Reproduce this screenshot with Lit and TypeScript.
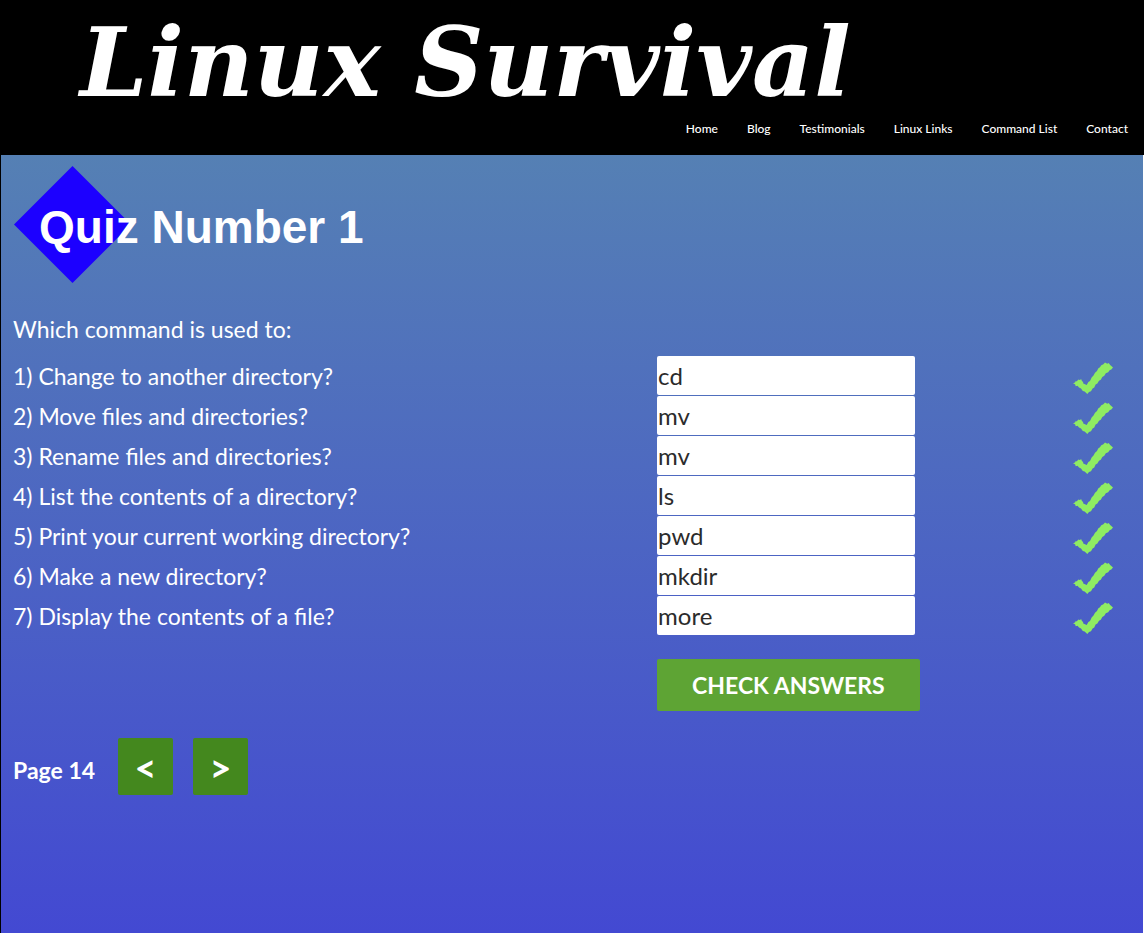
import { LitElement, html, css } from "lit";
import { customElement, state } from "lit/decorators.js";

interface Question {
  text: string;
  answer: string;
}

const NAV = ["Home", "Blog", "Testimonials", "Linux Links", "Command List", "Contact"];

const QUESTIONS: Question[] = [
  { text: "Change to another directory?", answer: "cd" },
  { text: "Move files and directories?", answer: "mv" },
  { text: "Rename files and directories?", answer: "mv" },
  { text: "List the contents of a directory?", answer: "ls" },
  { text: "Print your current working directory?", answer: "pwd" },
  { text: "Make a new directory?", answer: "mkdir" },
  { text: "Display the contents of a file?", answer: "more" },
];

@customElement("site-header")
export class SiteHeader extends LitElement {
  static styles = css`
    :host {
      display: block;
      background: #000;
      color: #fff;
    }
    .logo {
      display: block;
      padding: 7px 0 0 80px;
      font: italic bold 96px/112px "DejaVu Serif", serif;
      color: #fff;
      text-decoration: none;
      white-space: nowrap;
    }
    .nav {
      display: flex;
      justify-content: flex-end;
      gap: 29px;
      padding: 0 16px 16px 0;
      font: 500 12px/20px Lato, sans-serif;
    }
    .link {
      color: #fff;
      text-decoration: none;
    }
  `;

  render() {
    return html`
      <a class="logo" href="#">Linux Survival</a>
      <nav class="nav">${NAV.map((n) => html`<a class="link" href="#">${n}</a>`)}</nav>
    `;
  }
}

@customElement("quiz-row")
export class QuizRow extends LitElement {
  static properties = {
    number: { type: Number },
    text: { type: String },
    value: { type: String },
    correct: { type: Boolean },
  };
  declare number: number;
  declare text: string;
  declare value: string;
  declare correct: boolean;

  static styles = css`
    :host {
      display: grid;
      grid-template-columns: 57% 258px 1fr;
      align-items: start;
      height: 40px;
    }
    .label {
      line-height: 40px;
    }
    .answer {
      box-sizing: border-box;
      width: 100%;
      height: 39px;
      margin: 0;
      padding: 0 1px;
      border: 0;
      border-radius: 2px;
      background: #fff;
      color: #2b2b2b;
      font: 24px Lato, sans-serif;
    }
    .mark {
      justify-self: end;
      width: 40px;
      height: 32px;
      margin: 6px 30px 0 0;
      fill: #8fec62;
    }
  `;

  render() {
    return html`
      <label class="label" for="answer">${this.number}) ${this.text}</label>
      <input class="answer" id="answer" type="text" .value=${this.value} />
      ${this.correct
        ? html`<svg class="mark" viewBox="0 0 40 32" role="img" aria-label="Correct">
            <path
              d="M0 21.2 2 20.6 2.5 19.2 4 19.3 5.2 17.4 6.3 18 8.3 17.3 9 19.3 10 19.7 10.3 21.5 13.7 23 15.4 20 17 19 18.8 15.2 20.5 13.6 22 10.8 24 9 25.2 6.5 27.2 5 28 3.4 30.4 2.2 32 .6 34.3 1.8 35.6 1.1 37.2 3 40 5.4 38.3 7.4 36.6 8.2 35.2 10.2 32.8 11.2 31.3 13.8 29.3 15 27.8 17.8 26 18.7 24.4 21.6 22.6 22.6 21.3 25.4 19.6 26.4 18 29.2 16 30 14.3 32 11.6 29.4 9.8 29 8 26.4 6 25.5 4.5 23.7 2.8 24.2 2 22.3Z"
            />
          </svg>`
        : ""}
    `;
  }
}

@customElement("app-root")
export class AppRoot extends LitElement {
  @state() private page = 14;

  static styles = css`
    :host {
      display: flex;
      flex-direction: column;
      min-height: 100vh;
      font-family: Lato, sans-serif;
      color: #fff;
    }
    .main {
      flex: 1;
      padding: 0 0 0 12px;
      border-left: 1px solid #000;
      border-right: 1px solid #fff;
      background: linear-gradient(#5580b4, #4349d2);
      font-size: 23px;
    }
    .title {
      display: grid;
      align-items: center;
      margin: 11px 0 0;
      font: bold 46px/54px "Liberation Sans", sans-serif;
    }
    .diamond,
    .title-text {
      grid-area: 1 / 1;
    }
    .diamond {
      width: 120px;
      height: 117px;
      fill: #1c00ff;
    }
    .title-text {
      padding: 5px 0 0 26px;
    }
    .intro {
      margin: 31px 0 12px;
      line-height: 30px;
    }
    .actions {
      display: grid;
      grid-template-columns: 57% 1fr;
      margin-top: 23px;
    }
    .check {
      grid-column: 2;
      justify-self: start;
      height: 52px;
      padding: 0 35px;
      border: 0;
      border-radius: 2px;
      background: #5ea434;
      color: #fff;
      font: bold 23px Lato, sans-serif;
      text-transform: uppercase;
    }
    .pager {
      display: flex;
      align-items: center;
      gap: 20px;
      margin-top: 27px;
      font-weight: bold;
    }
    .page {
      padding: 6px 3px 0 0;
    }
    .step {
      width: 55px;
      height: 57px;
      padding: 0;
      border: 0;
      border-radius: 2px;
      background: #44881e;
      color: #fff;
      font: bold 38px Lato, sans-serif;
    }
  `;

  render() {
    return html`
      <site-header></site-header>
      <main class="main">
        <h1 class="title">
          <svg class="diamond" viewBox="0 0 120 117" aria-hidden="true">
            <path d="M1 58.5 59.5 0 118 58.5 59.5 117Z" />
          </svg>
          <span class="title-text">Quiz Number 1</span>
        </h1>
        <p class="intro">Which command is used to:</p>
        ${QUESTIONS.map(
          (q, i) => html`<quiz-row .number=${i + 1} .text=${q.text} .value=${q.answer} .correct=${true}></quiz-row>`
        )}
        <div class="actions"><button class="check" type="button">Check Answers</button></div>
        <nav class="pager">
          <span class="page">Page ${this.page}</span>
          <button class="step" type="button" aria-label="Previous page" @click=${() => this.page--}>&lt;</button>
          <button class="step" type="button" aria-label="Next page" @click=${() => this.page++}>&gt;</button>
        </nav>
      </main>
    `;
  }
}
